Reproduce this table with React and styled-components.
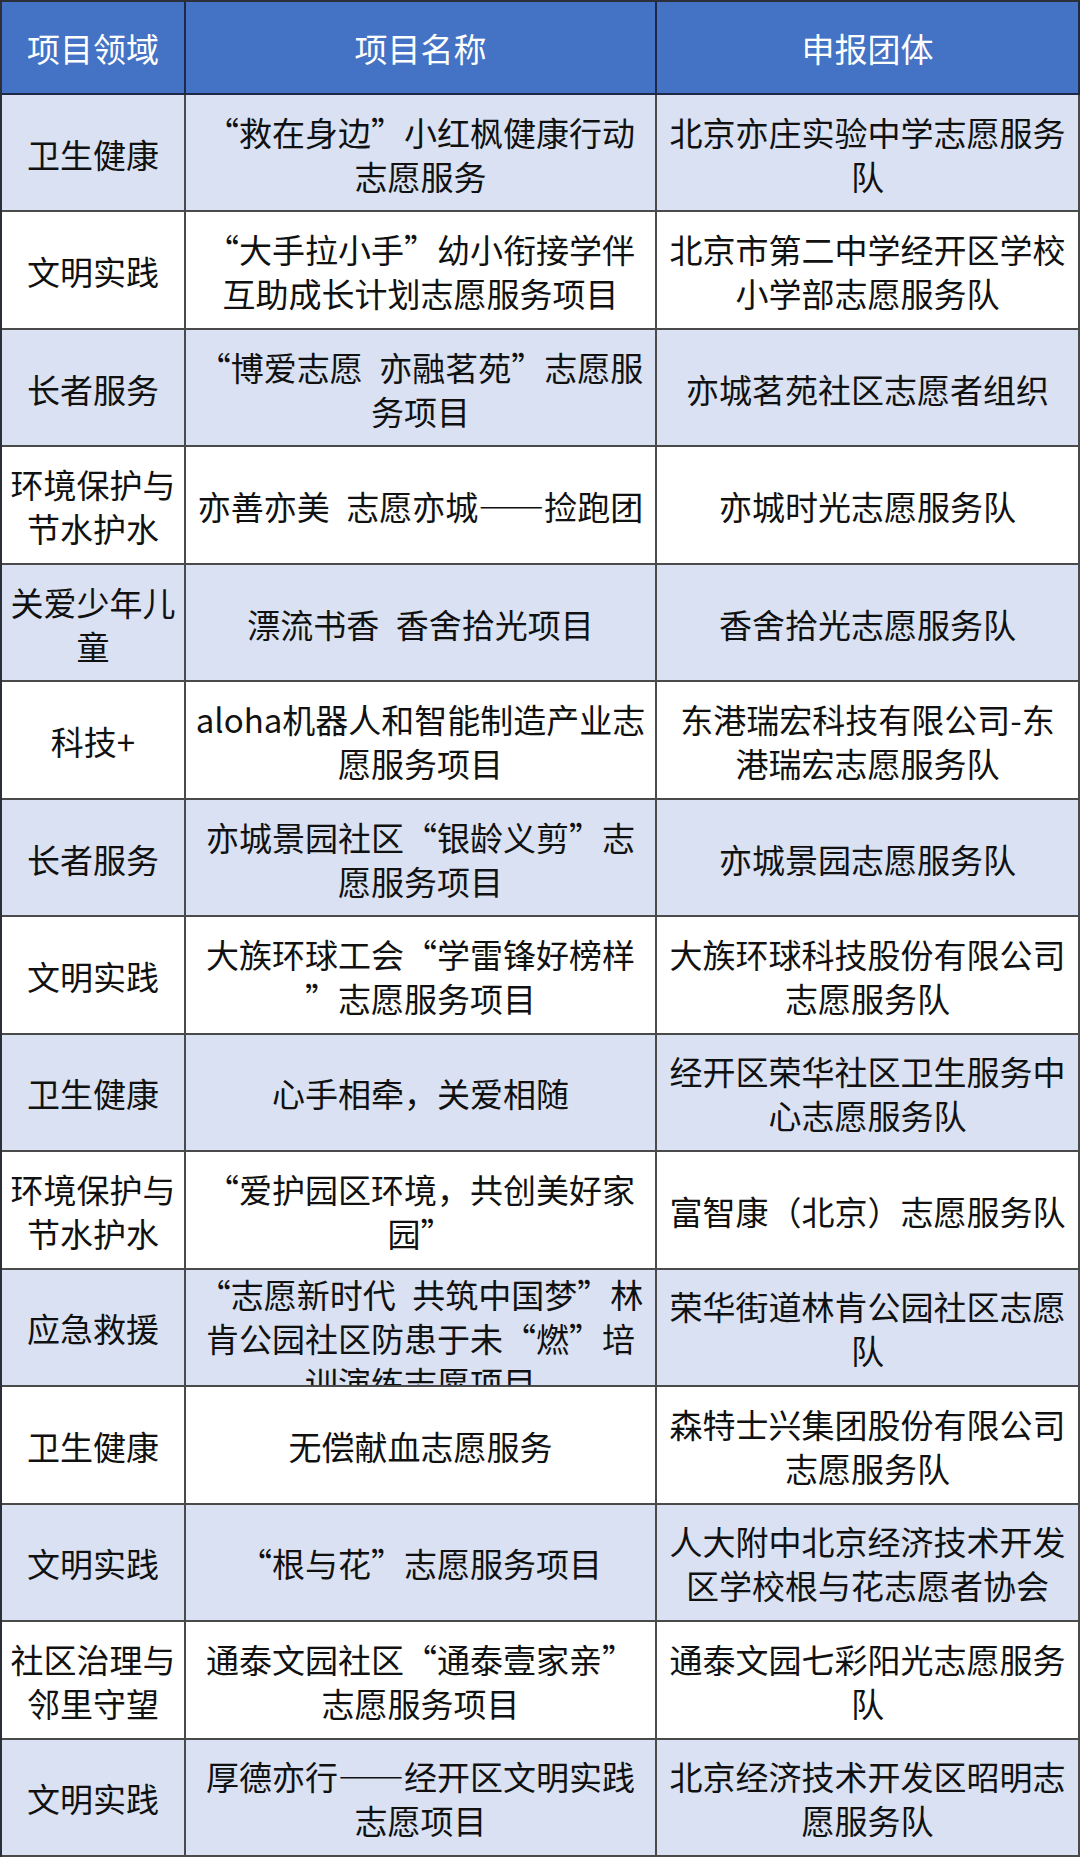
import React from "react";
import styled, { createGlobalStyle } from "styled-components";

const GlobalStyle = createGlobalStyle`
  html, body {
    margin: 0;
    padding: 0;
    background: #ffffff;
  }
  body {
    font-family: "Noto Sans CJK SC", "Noto Sans", sans-serif;
  }
`;

const Table = styled.div`
  display: grid;
  grid-template-columns: 184px 471px 1fr;
  grid-template-rows: 93px repeat(15, 1fr);
  width: 1080px;
  height: 1857px;
  box-sizing: border-box;
  border-top: 2px solid #2b2f3a;
  border-left: 2px solid #2b2f3a;
  font-family: "Noto Sans CJK SC", "Noto Sans", sans-serif;
`;

const Cell = styled.div`
  box-sizing: border-box;
  display: flex;
  flex-direction: column;
  justify-content: safe center;
  align-items: center;
  overflow: hidden;
  padding: ${(p) => (p.$header ? "0" : "2px 4px 0")};
  text-align: center;
  background: ${(p) => (p.$header ? "#4472c4" : p.$shade ? "#d9e1f2" : "#ffffff")};
  color: ${(p) => (p.$header ? "#ffffff" : "#111111")};
  border-right: 2px solid ${(p) => (p.$header ? "#1e2a45" : "#4a4a4a")};
  border-bottom: 2px solid ${(p) => (p.$header ? "#1e2a45" : "#4a4a4a")};
  font-size: 33px;
  line-height: 44px;
`;

const Line = styled.span`
  display: block;
  white-space: pre;
`;

const headers = ["项目领域", "项目名称", "申报团体"];

const S = "\u2002";

const rows = [
  [["卫生健康"], ["“救在身边”小红枫健康行动", "志愿服务"], ["北京亦庄实验中学志愿服务", "队"]],
  [["文明实践"], ["“大手拉小手”幼小衔接学伴", "互助成长计划志愿服务项目"], ["北京市第二中学经开区学校", "小学部志愿服务队"]],
  [["长者服务"], [`“博爱志愿${S}亦融茗苑”志愿服`, "务项目"], ["亦城茗苑社区志愿者组织"]],
  [["环境保护与", "节水护水"], [`亦善亦美${S}志愿亦城——捡跑团`], ["亦城时光志愿服务队"]],
  [["关爱少年儿", "童"], [`漂流书香${S}香舍拾光项目`], ["香舍拾光志愿服务队"]],
  [["科技+"], ["aloha机器人和智能制造产业志", "愿服务项目"], ["东港瑞宏科技有限公司-东", "港瑞宏志愿服务队"]],
  [["长者服务"], ["亦城景园社区“银龄义剪”志", "愿服务项目"], ["亦城景园志愿服务队"]],
  [["文明实践"], ["大族环球工会“学雷锋好榜样", "”志愿服务项目"], ["大族环球科技股份有限公司", "志愿服务队"]],
  [["卫生健康"], ["心手相牵，关爱相随"], ["经开区荣华社区卫生服务中", "心志愿服务队"]],
  [["环境保护与", "节水护水"], ["“爱护园区环境，共创美好家", "园”"], ["富智康（北京）志愿服务队"]],
  [["应急救援"], [`“志愿新时代${S}共筑中国梦”林`, "肯公园社区防患于未“燃”培", "训演练志愿项目"], ["荣华街道林肯公园社区志愿", "队"]],
  [["卫生健康"], ["无偿献血志愿服务"], ["森特士兴集团股份有限公司", "志愿服务队"]],
  [["文明实践"], ["“根与花”志愿服务项目"], ["人大附中北京经济技术开发", "区学校根与花志愿者协会"]],
  [["社区治理与", "邻里守望"], ["通泰文园社区“通泰壹家亲”", "志愿服务项目"], ["通泰文园七彩阳光志愿服务", "队"]],
  [["文明实践"], ["厚德亦行——经开区文明实践", "志愿项目"], ["北京经济技术开发区昭明志", "愿服务队"]],
];

export default function App() {
  return (
    <>
      <GlobalStyle />
      <Table lang="zh-CN">
        {headers.map((h) => (
          <Cell key={h} $header>
            <Line>{h}</Line>
          </Cell>
        ))}
        {rows.map((row, ri) =>
          row.map((lines, ci) => (
            <Cell key={`${ri}-${ci}`} $shade={ri % 2 === 0}>
              {lines.map((l, li) => (
                <Line key={li}>{l}</Line>
              ))}
            </Cell>
          ))
        )}
      </Table>
    </>
  );
}
